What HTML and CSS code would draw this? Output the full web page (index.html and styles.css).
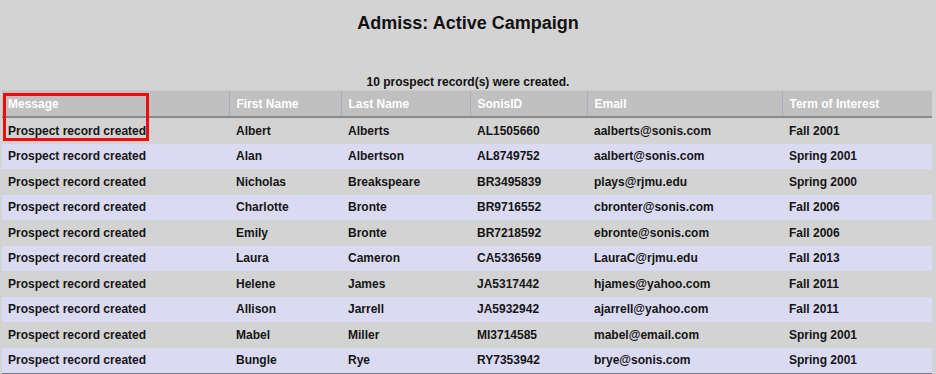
FILE: index.html
```html
<!DOCTYPE html>
<html>
<head>
<meta charset="utf-8">
<link rel="stylesheet" href="styles.css">
</head>
<body>
<div class="page">
  <h1 class="title">Admiss: Active Campaign</h1>
  <p class="summary">10 prospect record(s) were created.</p>
  <div class="table-wrap">
    <table class="grid">
      <colgroup>
        <col class="c-msg"><col class="c-first"><col class="c-last"><col class="c-id"><col class="c-email"><col class="c-term">
      </colgroup>
      <thead>
        <tr><th>Message</th><th>First Name</th><th>Last Name</th><th>SonisID</th><th>Email</th><th>Term of Interest</th></tr>
      </thead>
      <tbody>
        <tr><td>Prospect record created</td><td>Albert</td><td>Alberts</td><td>AL1505660</td><td>aalberts@sonis.com</td><td>Fall 2001</td></tr>
        <tr><td>Prospect record created</td><td>Alan</td><td>Albertson</td><td>AL8749752</td><td>aalbert@sonis.com</td><td>Spring 2001</td></tr>
        <tr><td>Prospect record created</td><td>Nicholas</td><td>Breakspeare</td><td>BR3495839</td><td>plays@rjmu.edu</td><td>Spring 2000</td></tr>
        <tr><td>Prospect record created</td><td>Charlotte</td><td>Bronte</td><td>BR9716552</td><td>cbronter@sonis.com</td><td>Fall 2006</td></tr>
        <tr><td>Prospect record created</td><td>Emily</td><td>Bronte</td><td>BR7218592</td><td>ebronte@sonis.com</td><td>Fall 2006</td></tr>
        <tr><td>Prospect record created</td><td>Laura</td><td>Cameron</td><td>CA5336569</td><td>LauraC@rjmu.edu</td><td>Fall 2013</td></tr>
        <tr><td>Prospect record created</td><td>Helene</td><td>James</td><td>JA5317442</td><td>hjames@yahoo.com</td><td>Fall 2011</td></tr>
        <tr><td>Prospect record created</td><td>Allison</td><td>Jarrell</td><td>JA5932942</td><td>ajarrell@yahoo.com</td><td>Fall 2011</td></tr>
        <tr><td>Prospect record created</td><td>Mabel</td><td>Miller</td><td>MI3714585</td><td>mabel@email.com</td><td>Spring 2001</td></tr>
        <tr><td>Prospect record created</td><td>Bungle</td><td>Rye</td><td>RY7353942</td><td>brye@sonis.com</td><td>Spring 2001</td></tr>
      </tbody>
    </table>
    <div class="highlight"></div>
  </div>
</div>
</body>
</html>
```

FILE: styles.css
```css
html, body {
  margin: 0;
  padding: 0;
  background: #d3d3d3;
}
body {
  font-family: "Liberation Sans", Arial, sans-serif;
  color: #111;
}
.page {
  width: 936px;
  height: 374px;
  overflow: hidden;
}
.title {
  margin: 0;
  padding-top: 12px;
  height: 22px;
  font-size: 18px;
  line-height: 22px;
  font-weight: bold;
  text-align: center;
  color: #111;
}
.summary {
  margin: 0;
  padding-top: 40px;
  font-size: 12px;
  line-height: 16px;
  font-weight: bold;
  text-align: center;
}
.table-wrap {
  position: relative;
  margin-left: 2px;
  width: 930px;
}
.grid {
  border-collapse: collapse;
  table-layout: fixed;
  width: 930px;
  font-size: 12px;
  font-weight: bold;
}
.c-msg { width: 227px; }
.c-first { width: 112px; }
.c-last { width: 129px; }
.c-id { width: 117px; }
.c-email { width: 195px; }
.c-term { width: 150px; }
.grid th {
  background: #c0c0c0;
  color: #fff;
  text-align: left;
  height: 25px;
  padding: 0 7px;
  border-left: 1px solid #a8b0c0;
  border-bottom: 2px solid #8a8a8a;
  border-top: 1px solid #cacaca;
}
.grid th:first-child {
  border-left: none;
  padding-left: 6px;
}
.grid td {
  height: 25.5px;
  padding: 0 7px;
  color: #151515;
  white-space: nowrap;
}
.grid td:first-child {
  padding-left: 6px;
}
.grid tbody tr:nth-child(even) td {
  background: #dadaf3;
}
.grid tbody tr:last-child td {
  border-bottom: 2px solid #7a7a82;
}
.highlight {
  position: absolute;
  left: 1px;
  top: 3px;
  width: 140px;
  height: 42px;
  border: 3px solid #f00c0c;
}
```
